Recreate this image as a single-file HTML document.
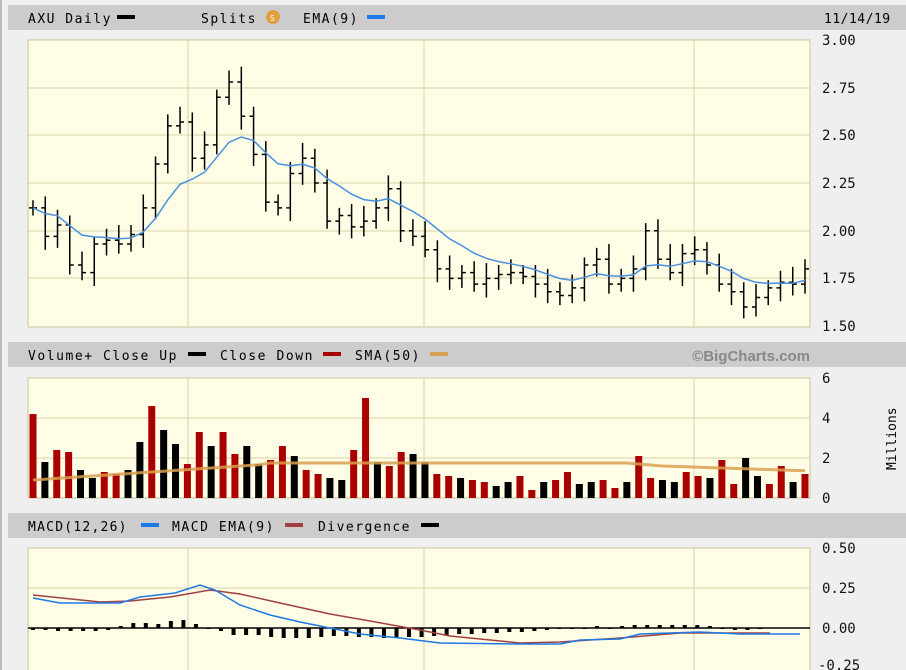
<!DOCTYPE html>
<html><head><meta charset="utf-8"><style>
body{margin:0;width:906px;height:670px;overflow:hidden;background:#efefef;font-family:"DejaVu Sans Mono","Liberation Mono",monospace}
svg{position:absolute;left:0;top:0}
.lg{letter-spacing:1.5px}
</style></head><body>
<svg width="906" height="670" xmlns="http://www.w3.org/2000/svg" font-family="DejaVu Sans Mono, Liberation Mono, monospace" font-size="13">
<rect x="0" y="0" width="906" height="670" fill="#efefef"/>
<rect x="0" y="0" width="2" height="670" fill="#bbb"/>
<rect x="8" y="5" width="898" height="25" fill="#cccccc"/>
<rect x="8" y="342" width="898" height="25" fill="#cccccc"/>
<rect x="8" y="513" width="898" height="25" fill="#cccccc"/>
<g class="lg">
<text x="28" y="23">AXU Daily</text>
<text x="201" y="23">Splits</text>
<text x="303" y="23">EMA(9)</text>
<text x="824" y="23" letter-spacing="0.5">11/14/19</text>
<text x="28" y="360" textLength="150">Volume+ Close Up</text>
<text x="220" y="360" textLength="94">Close Down</text>
<text x="355" y="360" textLength="66">SMA(50)</text>
<text x="28" y="531" textLength="100">MACD(12,26)</text>
<text x="172" y="531" textLength="103">MACD EMA(9)</text>
<text x="318" y="531" textLength="93">Divergence</text>
</g>
<rect x="117" y="15" width="18" height="4" fill="#000"/>
<circle cx="273" cy="17" r="7" fill="#e0a040"/><text x="270" y="21" font-size="8" fill="#fff">S</text>
<rect x="367" y="15" width="18" height="4" fill="#1e78e6"/>
<rect x="188" y="352" width="18" height="4" fill="#000"/>
<rect x="323" y="352" width="18" height="4" fill="#a00"/>
<rect x="430" y="352" width="18" height="4" fill="#d9a050"/>
<rect x="141" y="523" width="18" height="4" fill="#1e78e6"/>
<rect x="285" y="523" width="18" height="4" fill="#a04040"/>
<rect x="421" y="523" width="18" height="4" fill="#000"/>
<text x="810" y="361" font-family="Liberation Sans, sans-serif" font-weight="bold" font-size="15" fill="#888" text-anchor="end">©BigCharts.com</text>
<rect x="28" y="40" width="782" height="287" fill="#fffde6" stroke="#c8c49a"/>
<rect x="28" y="378" width="782" height="120" fill="#fffde6" stroke="#c8c49a"/>
<rect x="28" y="548" width="782" height="130" fill="#fffde6" stroke="#c8c49a"/>
<g stroke="#d8d4a8" stroke-width="1">
<line x1="28" x2="810" y1="88" y2="88"/><line x1="28" x2="810" y1="135" y2="135"/><line x1="28" x2="810" y1="183" y2="183"/><line x1="28" x2="810" y1="231" y2="231"/><line x1="28" x2="810" y1="278" y2="278"/>
<line x1="188" x2="188" y1="40" y2="327"/><line x1="424" x2="424" y1="40" y2="327"/><line x1="694" x2="694" y1="40" y2="327"/>
<line x1="28" x2="810" y1="418" y2="418"/><line x1="28" x2="810" y1="458" y2="458"/>
<line x1="188" x2="188" y1="378" y2="498"/><line x1="424" x2="424" y1="378" y2="498"/><line x1="694" x2="694" y1="378" y2="498"/>
<line x1="28" x2="810" y1="588" y2="588"/>
<line x1="188" x2="188" y1="548" y2="670"/><line x1="424" x2="424" y1="548" y2="670"/><line x1="694" x2="694" y1="548" y2="670"/>
</g>
<g font-size="14" fill="#111">
<text x="822" y="45">3.00</text><text x="822" y="93">2.75</text><text x="822" y="140">2.50</text><text x="822" y="188">2.25</text><text x="822" y="236">2.00</text><text x="822" y="283">1.75</text><text x="822" y="331">1.50</text>
<text x="822" y="383">6</text><text x="822" y="423">4</text><text x="822" y="463">2</text><text x="822" y="503">0</text>
<text x="822" y="553">0.50</text><text x="822" y="593">0.25</text><text x="822" y="633">0.00</text><text x="818" y="670">-0.25</text>
</g>
<text transform="translate(896,470) rotate(-90)" font-size="13">Millions</text>
<g id="price" stroke="#000" stroke-width="1.5" fill="none"></g>
<polyline id="ema" fill="none" stroke="#4a90e2" stroke-width="1.5"/>
<g id="vol"></g>
<polyline id="sma" fill="none" stroke="#d9a050" stroke-width="3" opacity="0.85"/>
<g id="div" fill="#000"></g>
<line x1="28" x2="810" y1="628" y2="628" stroke="#000" stroke-width="1.5"/>
<polyline fill="none" stroke="#a04040" stroke-width="1.5" points="33,595 100,602 130,601 170,597 210,590 240,594 280,603 330,614 370,621 420,630 450,636 520,643 560,642 620,638 680,633 720,633 770,633"/>
<polyline fill="none" stroke="#1e78e6" stroke-width="1.5" points="33,598 60,603 120,603 140,597 175,593 200,585 215,590 240,605 270,615 300,622 330,628 360,634 400,638 440,643 520,644 560,644 580,640 620,639 640,634 700,632 740,634 800,634"/>
</svg>
<script>
var c=[2.12,1.97,2.03,1.82,1.78,1.93,1.95,1.93,1.98,2.12,2.35,2.55,2.57,2.38,2.45,2.70,2.78,2.60,2.40,2.15,2.12,2.30,2.38,2.25,2.05,2.08,2.02,2.05,2.12,2.22,2.00,1.97,1.90,1.80,1.75,1.78,1.72,1.75,1.77,1.78,1.76,1.72,1.68,1.66,1.70,1.82,1.85,1.72,1.75,1.80,2.00,1.85,1.78,1.88,1.90,1.82,1.72,1.68,1.60,1.65,1.70,1.73,1.72,1.80];
var v=[4.2,1.8,2.4,2.3,1.4,1.0,1.3,1.2,1.4,2.8,4.6,3.4,2.7,1.7,3.3,2.6,3.3,2.2,2.6,1.7,1.9,2.6,2.1,1.4,1.2,1.0,0.9,2.4,5.0,1.8,1.6,2.3,2.2,1.8,1.2,1.1,1.0,0.9,0.8,0.6,0.8,1.1,0.4,0.8,0.9,1.3,0.7,0.8,0.9,0.5,0.8,2.1,1.0,0.9,0.8,1.3,1.1,1.0,1.9,0.7,2.0,1.1,0.7,1.6,0.8,1.2];
var NS="http://www.w3.org/2000/svg",n=c.length,sp=(805-33)/(n-1);
function Y(p){return 40+(3-p)*190.7}
var g=document.getElementById('price'),e=c[0],ep=[];
function el(t,a,p){var x=document.createElementNS(NS,t);for(var k in a)x.setAttribute(k,a[k]);p.appendChild(x);}
for(var i=0;i<n;i++){var x=33+i*sp,p=c[i],o=i?c[i-1]:p,h=Math.max(p,o)+0.04+((i*7)%5)*0.01,l=Math.min(p,o)-0.04-((i*3)%4)*0.01;
el('path',{d:'M'+x+' '+Y(h)+'V'+Y(l)+'M'+(x-4)+' '+Y(o)+'H'+x+'M'+x+' '+Y(p)+'H'+(x+4)},g);
e=i?e+(p-e)*0.2:p;ep.push(x+','+Y(e).toFixed(1));}
document.getElementById('ema').setAttribute('points',ep.join(' '));
var vg=document.getElementById('vol'),m=v.length,vs=(805-33)/(m-1),sm=[];
for(var i=0;i<m;i++){var x=33+i*vs,up=((i*5+3)%7)<3||v[i]>2.6&&i%2==1;
el('rect',{x:x-3.5,y:498-v[i]*20,width:7,height:v[i]*20,fill:up?'#000':'#a00'},vg);
var s=i<20?0.9+i*0.04:(i<50?1.75:(i<53?1.75-(i-50)*0.05:1.6-(i-53)*0.02));sm.push(x+','+(498-s*20).toFixed(1));}
document.getElementById('sma').setAttribute('points',sm.join(' '));
var d=[-2,-2,-3,-3,-3,-3,-2,2,5,5,4,7,8,4,0,-3,-7,-7,-7,-9,-10,-10,-10,-9,-8,-8,-9,-9,-10,-10,-9,-9,-8,-7,-6,-6,-5,-5,-4,-4,-3,-2,0,0,0,2,0,2,3,3,3,3,3,3,2,0,-2,-2,0];
var dg=document.getElementById('div'),dn=d.length,ds=(760-33)/(dn-1);
for(var i=0;i<dn;i++){var x=33+i*ds,h=d[i];el('rect',{x:x-2,y:h>0?628-h:628,width:4,height:Math.abs(h)||1},dg);}
</script>
</body></html>
